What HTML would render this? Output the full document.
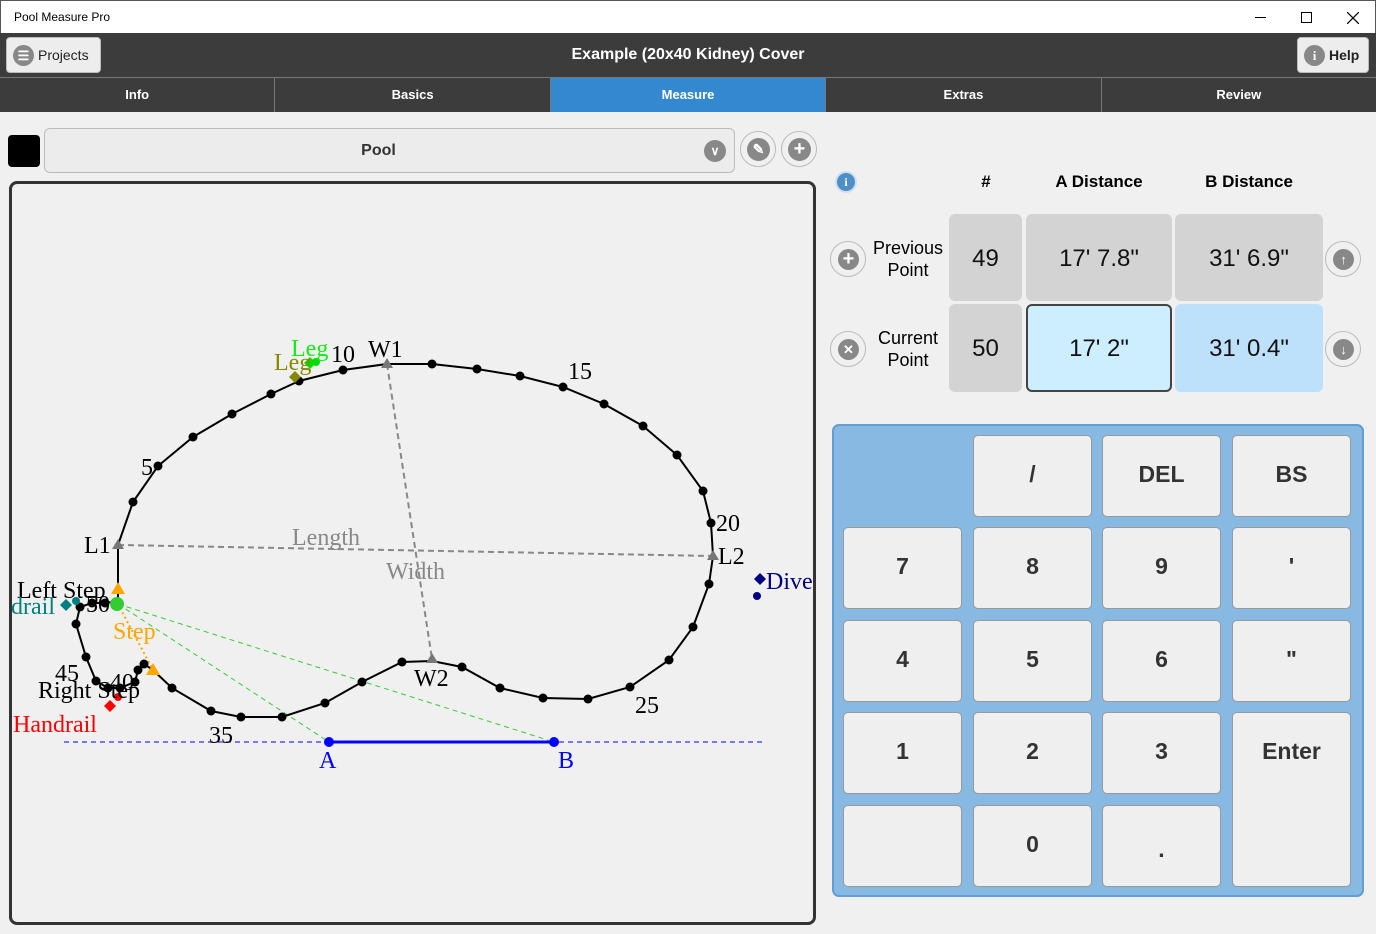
<!DOCTYPE html>
<html><head><meta charset="utf-8"><style>
*{box-sizing:border-box;margin:0;padding:0}
body{width:1376px;height:934px;position:relative;background:#f0f0f0;font-family:"Liberation Sans",sans-serif;overflow:hidden}
.a{position:absolute}
.tb{left:0;top:0;width:1376px;height:33px;background:#fff;border:1px solid #555;border-bottom:none}
.hdr{left:0;top:33px;width:1376px;height:44px;background:#3c3c3c}
.tabs{left:0;top:77px;width:1376px;height:35px;background:#3c3c3c;display:flex;border-top:1px solid #777}
.tab{flex:1;color:#fff;font-weight:bold;font-size:13px;text-align:center;line-height:34px;border-right:1px solid #777}
.btn{background:#ededed;border:1px solid #bbb;border-radius:4px}
.rb{border-radius:50%;border:1px solid #bbb;background:#f0f0f0}
.ic{position:absolute;border-radius:50%;background:#888;color:#fff;text-align:center;font-weight:bold}
.cell{position:absolute;border-radius:6px;text-align:center;font-size:24px;color:#111}
.key{position:absolute;width:119px;height:82px;background:#efefef;border:1px solid #999;border-radius:5px;font-weight:bold;font-size:23px;color:#333;text-align:center;line-height:76px}
</style></head><body>
<div class="a tb"><span class="a" style="left:13px;top:9px;font-size:12px;color:#000">Pool Measure Pro</span>
<span class="a" style="left:1254px;top:16px;width:11px;height:1px;background:#000"></span>
<span class="a" style="left:1300px;top:11px;width:11px;height:11px;border:1px solid #000"></span>
<svg class="a" style="left:1346px;top:11px" width="12" height="12"><path d="M0,0L12,12M12,0L0,12" stroke="#000" stroke-width="1.2"/></svg></div>
<div class="a hdr">
<div class="a btn" style="left:6px;top:4px;width:95px;height:36px"><div class="ic" style="left:6px;top:7px;width:21px;height:21px;font-size:13px;line-height:21px">☰</div><span class="a" style="left:31px;top:9px;font-size:14px;color:#222">Projects</span></div>
<div class="a" style="left:0;width:1376px;top:13px;text-align:center;color:#fff;font-weight:bold;font-size:16px">Example (20x40 Kidney) Cover</div>
<div class="a btn" style="left:1297px;top:4px;width:72px;height:36px"><div class="ic" style="left:6px;top:7px;width:21px;height:21px;font-size:13px;line-height:21px;font-family:'Liberation Serif',serif">i</div><span class="a" style="left:31px;top:9px;font-size:14px;color:#222;font-weight:bold">Help</span></div>
</div>
<div class="a tabs"><div class="tab">Info</div><div class="tab">Basics</div><div class="tab" style="background:#3388d0">Measure</div><div class="tab">Extras</div><div class="tab" style="border:none">Review</div></div>

<div class="a" style="left:8px;top:135px;width:32px;height:32px;background:#000;border-radius:4px"></div>
<div class="a btn" style="left:44px;top:128px;width:691px;height:45px;border-radius:6px;background:#ececec"><span class="a" style="left:0;width:667px;text-align:center;top:13px;font-size:16px;font-weight:bold;color:#333">Pool</span><div class="ic" style="left:659px;top:11px;width:22px;height:22px;font-size:12px;line-height:22px">∨</div></div>
<div class="a rb" style="left:740px;top:131px;width:36px;height:36px"><div class="ic" style="left:6px;top:6px;width:23px;height:23px;font-size:14px;line-height:23px">✎</div></div>
<div class="a rb" style="left:781px;top:131px;width:36px;height:36px"><div class="ic" style="left:6px;top:6px;width:23px;height:23px;font-size:20px;line-height:23px">+</div></div>

<div class="a" style="left:9px;top:181px;width:807px;height:744px;border:3px solid #333;border-radius:8px"></div>
<svg class="a" style="left:0;top:0" width="1376" height="934" font-family="Liberation Serif,serif" font-size="24">
<line x1="118" y1="545" x2="713" y2="556" stroke="#888" stroke-width="2" stroke-dasharray="6,4"/>
<line x1="387" y1="364" x2="432" y2="659" stroke="#888" stroke-width="2" stroke-dasharray="6,4"/>
<line x1="64" y1="742" x2="762" y2="742" stroke="#00f" stroke-width="1" stroke-dasharray="5,4"/>
<line x1="329" y1="742" x2="554" y2="742" stroke="#00f" stroke-width="3"/>
<line x1="118" y1="604" x2="329" y2="742" stroke="#3c3" stroke-width="1" stroke-dasharray="5,4"/>
<line x1="118" y1="604" x2="554" y2="742" stroke="#3c3" stroke-width="1" stroke-dasharray="5,4"/>
<line x1="120" y1="608" x2="153" y2="670" stroke="orange" stroke-width="2" stroke-dasharray="2,3"/>
<polyline fill="none" stroke="#000" stroke-width="2" points="118,545 133,502 158,466 193,437 232,414 271,394 299,381 343,370 387,364 432,364 477,369 520,376 563,387 604,404 643,426 677,455 703,491 711,523 713,556 709,584 693,627 669,660 630,687 588,699 543,698 500,688 462,667 432,661 402,662 362,682 325,703 282,717 241,717 211,711 172,688 153,670 144,664 138,670 135,682 120,688 108,688 96,681 86,657 76,624 80,607 92,603 105,603 118,601 118,590 118,545"/>
<g fill="#000">
<circle cx="133" cy="502" r="4.5"/><circle cx="158" cy="466" r="4.5"/><circle cx="193" cy="437" r="4.5"/><circle cx="232" cy="414" r="4.5"/><circle cx="271" cy="394" r="4.5"/><circle cx="299" cy="381" r="4.5"/><circle cx="343" cy="370" r="4.5"/><circle cx="432" cy="364" r="4.5"/><circle cx="477" cy="369" r="4.5"/><circle cx="520" cy="376" r="4.5"/><circle cx="563" cy="387" r="4.5"/><circle cx="604" cy="404" r="4.5"/><circle cx="643" cy="426" r="4.5"/><circle cx="677" cy="455" r="4.5"/><circle cx="703" cy="491" r="4.5"/><circle cx="711" cy="523" r="4.5"/><circle cx="709" cy="584" r="4.5"/><circle cx="693" cy="627" r="4.5"/><circle cx="669" cy="660" r="4.5"/><circle cx="630" cy="687" r="4.5"/><circle cx="588" cy="699" r="4.5"/><circle cx="543" cy="698" r="4.5"/><circle cx="500" cy="688" r="4.5"/><circle cx="462" cy="667" r="4.5"/><circle cx="402" cy="662" r="4.5"/><circle cx="362" cy="682" r="4.5"/><circle cx="325" cy="703" r="4.5"/><circle cx="282" cy="717" r="4.5"/><circle cx="241" cy="717" r="4.5"/><circle cx="211" cy="711" r="4.5"/><circle cx="172" cy="688" r="4.5"/><circle cx="144" cy="664" r="4.5"/><circle cx="138" cy="670" r="4.5"/><circle cx="135" cy="682" r="4.5"/><circle cx="120" cy="688" r="4.5"/><circle cx="108" cy="688" r="4.5"/><circle cx="96" cy="681" r="4.5"/><circle cx="86" cy="657" r="4.5"/><circle cx="76" cy="624" r="4.5"/><circle cx="80" cy="607" r="4.5"/><circle cx="92" cy="603" r="4.5"/><circle cx="105" cy="603" r="4.5"/>
</g>
<circle cx="117" cy="604" r="7" fill="#3c3"/>
<g fill="#777"><path d="M118,539 l6,10 h-12z"/><path d="M713,550 l6,10 h-12z"/><path d="M387,358 l6,10 h-12z"/><path d="M432,653 l6,10 h-12z"/></g>
<g fill="orange"><path d="M118,582 l7,12 h-14z"/><path d="M153,663 l7,12 h-14z"/></g>
<path d="M295,371 l6,6 -6,6 -6,-6z" fill="#880"/>
<path d="M310,357 l6,6 -6,6 -6,-6z" fill="#0d0"/><circle cx="316" cy="362" r="4" fill="#0d0"/>
<path d="M66,599 l6,6 -6,6 -6,-6z" fill="teal"/><circle cx="76" cy="601" r="4" fill="teal"/>
<path d="M110,700 l6,6 -6,6 -6,-6z" fill="red"/><circle cx="118" cy="697" r="4" fill="red"/>
<path d="M760,573 l6,6 -6,6 -6,-6z" fill="navy"/><circle cx="757" cy="596" r="4" fill="navy"/>
<circle cx="329" cy="742" r="5" fill="#00f"/><circle cx="554" cy="742" r="5" fill="#00f"/>
<g fill="#000"><text x="141" y="475">5</text><text x="331" y="362">10</text><text x="368" y="357">W1</text><text x="568" y="379">15</text><text x="716" y="531">20</text><text x="718" y="564">L2</text><text x="84" y="553">L1</text><text x="635" y="713">25</text><text x="209" y="743">35</text><text x="414" y="686">W2</text><text x="55" y="681">45</text><text x="110" y="690">40</text><text x="38" y="698">Right Step</text><text x="17" y="598">Left Step</text><text x="86" y="612">50</text></g>
<g fill="#888"><text x="292" y="545">Length</text><text x="386" y="579">Width</text></g>
<text x="291" y="356" fill="#1e1">Leg</text><text x="274" y="370" fill="#880">Leg</text>
<text x="11" y="614" fill="teal">drail</text><text x="113" y="639" fill="orange">Step</text>
<text x="13" y="732" fill="red">Handrail</text><text x="766" y="589" fill="navy">Dive</text>
<text x="319" y="768" fill="#00f">A</text><text x="558" y="768" fill="#00f">B</text>
</svg>

<div class="a" style="left:835px;top:171px;width:22px;height:22px;border-radius:50%;background:#4d8fc6;border:2px solid #cfe0ef;color:#fff;font-size:12px;font-weight:bold;text-align:center;line-height:18px;font-family:'Liberation Serif',serif">i</div>
<div class="a" style="left:949px;top:172px;width:74px;text-align:center;font-weight:bold;font-size:17px">#</div>
<div class="a" style="left:1026px;top:172px;width:146px;text-align:center;font-weight:bold;font-size:17px">A Distance</div>
<div class="a" style="left:1175px;top:172px;width:148px;text-align:center;font-weight:bold;font-size:17px">B Distance</div>
<div class="a rb" style="left:830px;top:241px;width:36px;height:36px"><div class="ic" style="left:7px;top:7px;width:21px;height:21px;font-size:20px;line-height:21px">+</div></div>
<div class="a rb" style="left:830px;top:331px;width:36px;height:36px"><div class="ic" style="left:7px;top:7px;width:21px;height:21px;font-size:13px;line-height:21px">✕</div></div>
<div class="a rb" style="left:1325px;top:241px;width:36px;height:36px"><div class="ic" style="left:7px;top:7px;width:21px;height:21px;font-size:13px;line-height:21px">↑</div></div>
<div class="a rb" style="left:1325px;top:331px;width:36px;height:36px"><div class="ic" style="left:7px;top:7px;width:21px;height:21px;font-size:13px;line-height:21px">↓</div></div>
<div class="a" style="left:868px;top:237px;width:80px;text-align:center;font-size:18px;line-height:22px">Previous<br>Point</div>
<div class="a" style="left:868px;top:327px;width:80px;text-align:center;font-size:18px;line-height:22px">Current<br>Point</div>
<div class="cell" style="left:949px;top:214px;width:73px;height:87px;background:#d3d3d3;line-height:90px">49</div>
<div class="cell" style="left:1026px;top:214px;width:146px;height:87px;background:#d3d3d3;line-height:90px">17' 7.8"</div>
<div class="cell" style="left:1175px;top:214px;width:148px;height:87px;background:#d3d3d3;line-height:90px">31' 6.9"</div>
<div class="cell" style="left:949px;top:304px;width:73px;height:88px;background:#d3d3d3;line-height:90px">50</div>
<div class="cell" style="left:1026px;top:304px;width:146px;height:88px;background:#cdeeff;border:2px solid #444;line-height:86px">17' 2"</div>
<div class="cell" style="left:1175px;top:304px;width:148px;height:88px;background:#bde0fb;line-height:90px">31' 0.4"</div>

<div class="a" style="left:832px;top:424px;width:532px;height:473px;background:#87b9e3;border:2px solid #5f9fd6;border-radius:7px"></div>
<div class="key" style="left:973px;top:435px">/</div><div class="key" style="left:1102px;top:435px">DEL</div><div class="key" style="left:1232px;top:435px">BS</div>
<div class="key" style="left:843px;top:527px">7</div><div class="key" style="left:973px;top:527px">8</div><div class="key" style="left:1102px;top:527px">9</div><div class="key" style="left:1232px;top:527px">'</div>
<div class="key" style="left:843px;top:620px">4</div><div class="key" style="left:973px;top:620px">5</div><div class="key" style="left:1102px;top:620px">6</div><div class="key" style="left:1232px;top:620px">"</div>
<div class="key" style="left:843px;top:712px">1</div><div class="key" style="left:973px;top:712px">2</div><div class="key" style="left:1102px;top:712px">3</div><div class="key" style="left:1232px;top:712px;height:175px">Enter</div>
<div class="key" style="left:843px;top:805px"></div><div class="key" style="left:973px;top:805px">0</div><div class="key" style="left:1102px;top:805px;line-height:86px">.</div>
</body></html>
